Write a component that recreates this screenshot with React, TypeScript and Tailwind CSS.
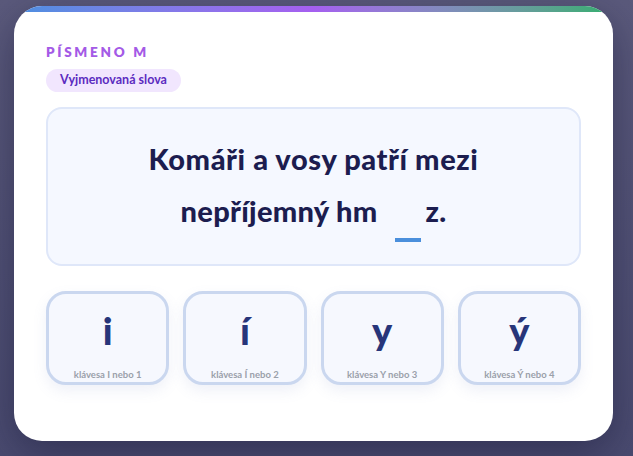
import React from 'react';

interface Choice {
  letter: string;
  hint: string;
}

const choices: Choice[] = [
  { letter: 'i', hint: 'klávesa I nebo 1' },
  { letter: 'í', hint: 'klávesa Í nebo 2' },
  { letter: 'y', hint: 'klávesa Y nebo 3' },
  { letter: 'ý', hint: 'klávesa Ý nebo 4' },
];

export default function App() {
  return (
    <div className="w-[633px] h-[456px] overflow-hidden bg-gradient-to-b from-[#5b5a7c] to-[#4a4b70] pt-[6px] pl-[14px] font-['Lato',sans-serif]">
      <div className="w-[599px] h-[435px] bg-white rounded-[28px] overflow-hidden shadow-[0_12px_40px_rgba(20,20,50,0.45)]">
        {/* gradient strip */}
        <div className="h-[6px] bg-gradient-to-r from-[#4a8fe0] via-[#a55ff0] to-[#2fae6e]" />

        <div className="px-[32px] pt-[32px]">
          <div className="text-[13.5px] font-extrabold tracking-[0.2em] text-[#a45ae6] leading-[16px]">
            PÍSMENO M
          </div>
          <div className="mt-[9px] inline-flex items-center h-[23px] px-[14px] rounded-full bg-[#f1e6fe] text-[12.5px] font-bold text-[#5b2bc0]">
            Vyjmenovaná slova
          </div>

          {/* sentence box */}
          <div className="mt-[15px] h-[159px] rounded-[16px] border-2 border-[#dfe7f9] bg-[#f5f8ff] flex flex-col items-center justify-center pb-[4px]">
            <p className="text-[29px] font-black text-[#1c1d4f] leading-[52px] text-center tracking-[0.02em]">
              Komáři a vosy patří mezi
            </p>
            <p className="text-[29px] font-black text-[#1c1d4f] leading-[52px] text-center flex items-baseline tracking-[0.01em]">
              <span>nepříjemný hm</span>
              <span className="relative inline-block w-[48px] h-[20px]">
                <span className="absolute left-[18px] top-[36px] w-[26px] h-[4px] bg-[#4a8fdc]" />
              </span>
              <span>z.</span>
            </p>
          </div>

          {/* choices */}
          <div className="mt-[25px] grid grid-cols-4 gap-[14px]">
            {choices.map((c) => (
              <div
                key={c.letter}
                className="h-[94px] rounded-[20px] border-[3px] border-[#cad7ef] bg-[#f6f8fe] flex flex-col items-center shadow-[0_6px_14px_rgba(120,140,200,0.12)]"
              >
                <div className="mt-[14px] h-[44px] flex items-center text-[38px] font-black text-[#27357a] leading-none">
                  {c.letter}
                </div>
                <div className="mt-[18px] text-[9.5px] font-bold text-[#9aa0aa] leading-none">{c.hint}</div>
              </div>
            ))}
          </div>
        </div>
      </div>
    </div>
  );
}
